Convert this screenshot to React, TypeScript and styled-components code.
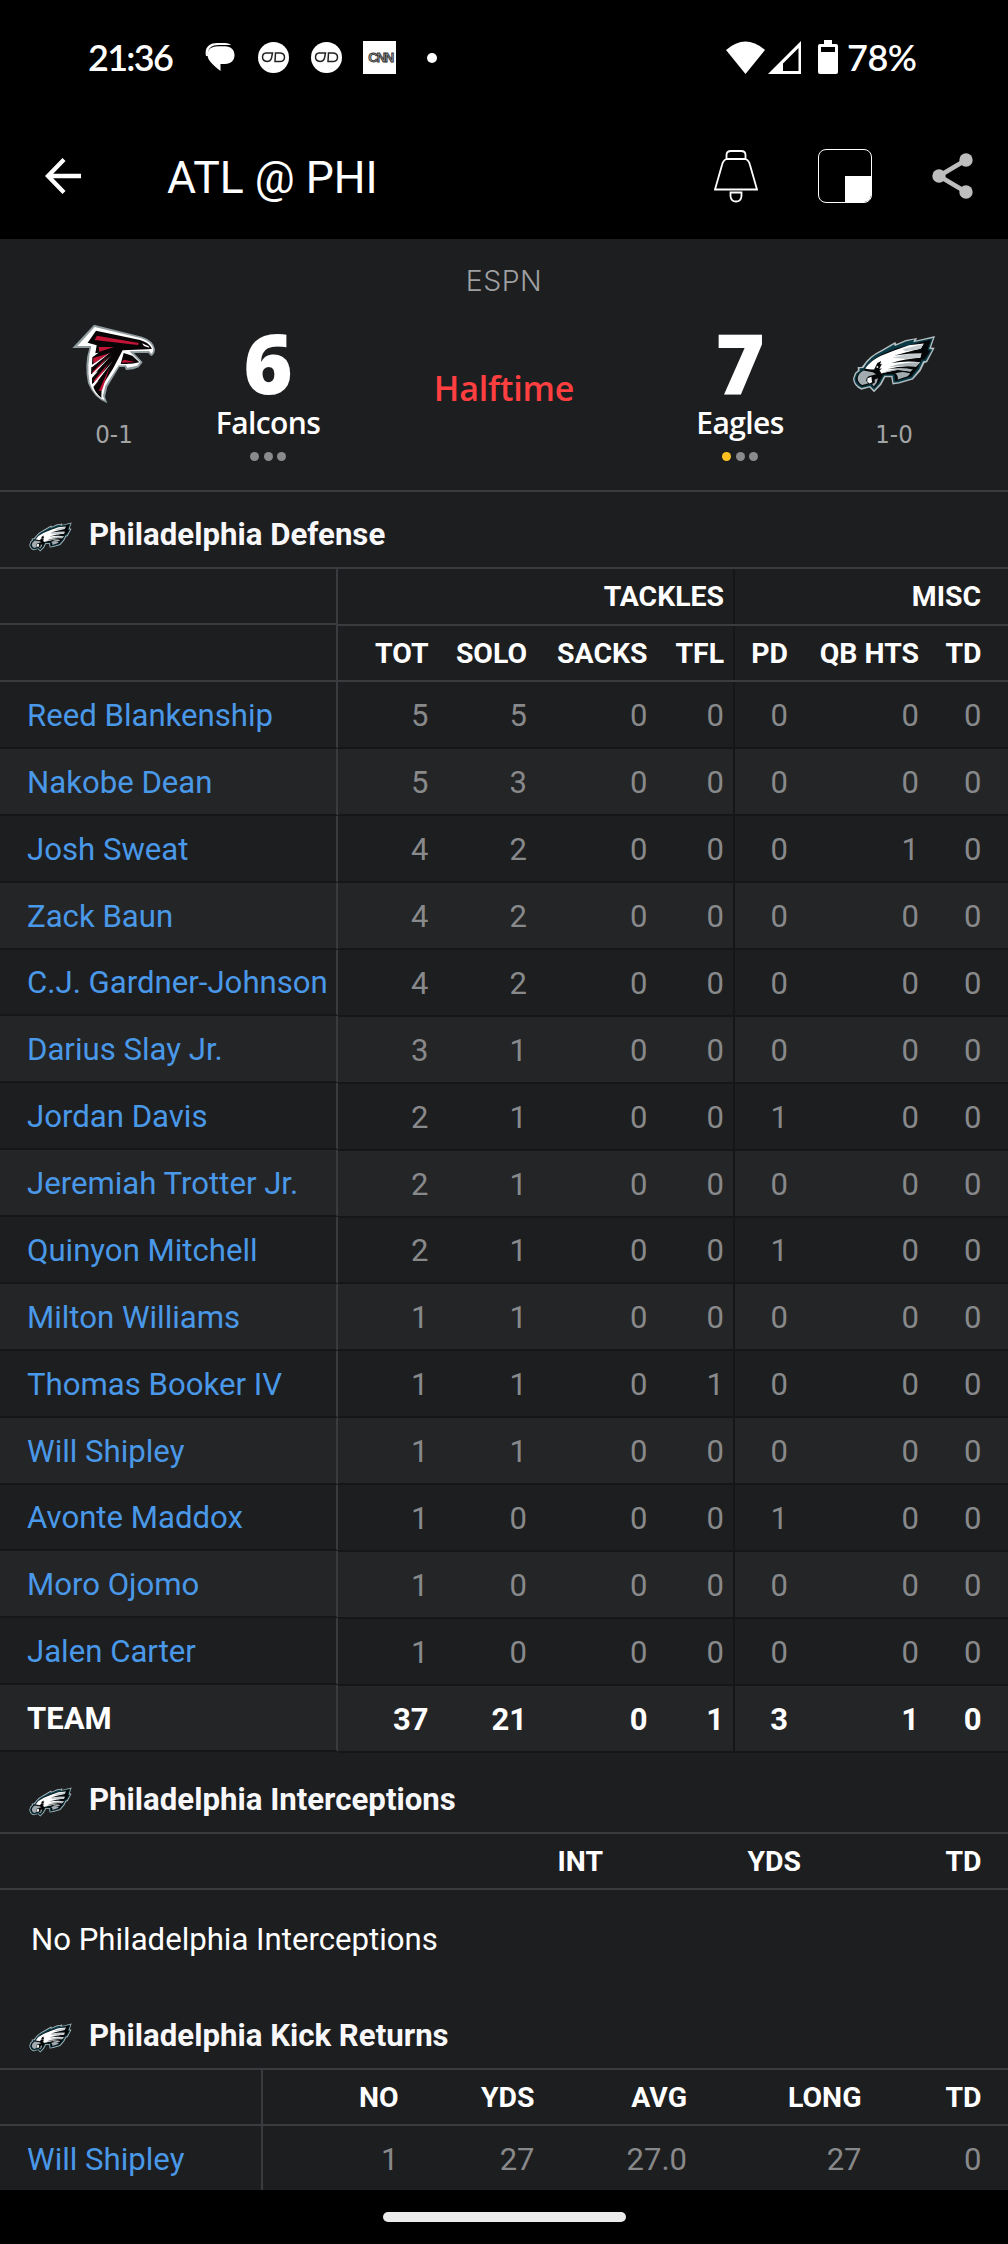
import React from "react";
import styled, { createGlobalStyle } from "styled-components";

interface PlayerRow {
  name: string;
  stats: string[];
}

const defense: PlayerRow[] = [
  { name: "Reed Blankenship", stats: ["5", "5", "0", "0", "0", "0", "0"] },
  { name: "Nakobe Dean", stats: ["5", "3", "0", "0", "0", "0", "0"] },
  { name: "Josh Sweat", stats: ["4", "2", "0", "0", "0", "1", "0"] },
  { name: "Zack Baun", stats: ["4", "2", "0", "0", "0", "0", "0"] },
  { name: "C.J. Gardner-Johnson", stats: ["4", "2", "0", "0", "0", "0", "0"] },
  { name: "Darius Slay Jr.", stats: ["3", "1", "0", "0", "0", "0", "0"] },
  { name: "Jordan Davis", stats: ["2", "1", "0", "0", "1", "0", "0"] },
  { name: "Jeremiah Trotter Jr.", stats: ["2", "1", "0", "0", "0", "0", "0"] },
  { name: "Quinyon Mitchell", stats: ["2", "1", "0", "0", "1", "0", "0"] },
  { name: "Milton Williams", stats: ["1", "1", "0", "0", "0", "0", "0"] },
  { name: "Thomas Booker IV", stats: ["1", "1", "0", "1", "0", "0", "0"] },
  { name: "Will Shipley", stats: ["1", "1", "0", "0", "0", "0", "0"] },
  { name: "Avonte Maddox", stats: ["1", "0", "0", "0", "1", "0", "0"] },
  { name: "Moro Ojomo", stats: ["1", "0", "0", "0", "0", "0", "0"] },
  { name: "Jalen Carter", stats: ["1", "0", "0", "0", "0", "0", "0"] },
  { name: "TEAM", stats: ["37", "21", "0", "1", "3", "1", "0"] },
];

const tackleHeads = ["TOT", "SOLO", "SACKS", "TFL"];
const miscHeads = ["PD", "QB HTS", "TD"];

const EaglesLogo: React.FC<{ width: number; height: number }> = ({
  width,
  height,
}) => (
  <svg width={width} height={height} viewBox="878 253 253 176">
    <path
      d="M880 386 L886 368 L895 360 L894 350 L906 350 L912 343 Q930 316 965 299 L1008 274 L1012 280 L1040 268 L1075 262 L1071 270 L1129 256 L1117 291 L1128 292 L1105 336 L1097 338 L1085 362 L1062 388 L1020 400 L1000 403 L996 381 L978 381 L966 404 L944 427 L930 412 L906 419 Q882 410 880 386Z"
      fill="#b4bdc0"
    />
    <path
      d="M884 386 L890 370 L900 362 L900 354 L912 353 Q930 320 966 304 L1004 282 L1008 286 L1040 273 L1066 267 L1063 275 L1123 262 L1111 295 L1121 297 L1102 331 L1093 333 L1081 358 L1059 384 L1018 396 L1003 398 L1000 377 L975 377 L962 401 L944 420 L932 408 L906 414 Q886 406 884 386Z"
      fill="#0a3a45"
    />
    <path
      d="M889 386 L895 371 L906 362 L914 358 Q934 328 970 311 L1010 294 L1062 281 L1117 267 L1106 298 L1114 302 L1097 327 L1087 328 L1076 354 L1056 379 L1008 393 L1006 372 L972 373 L958 398 L944 413 L934 401 L908 409 Q892 402 889 386Z"
      fill="#050607"
    />
    {/* beak */}
    <path
      d="M894 386 Q896 368 912 361 L940 366 L950 372 L936 376 Q920 378 920 392 L926 400 L908 405 Q896 399 894 386Z"
      fill="#a2acb0"
    />
    <path d="M924 384 L936 380 L938 396 L930 400 L923 394Z" fill="#f4f6f6" />
    <path d="M946 388 L956 384 L952 398 L943 409 L938 402 L946 398Z" fill="#a2acb0" />
    {/* crown and feathers */}
    <path
      d="M917 355 Q934 330 965 316 L1005 300 L1050 284 L1095 279 L1085 295 L1050 303 L1088 307 L1084 322 L1050 327 L1084 336 L1070 350 L1040 350 L1062 356 L1054 364 L1016 358 L966 370 L962 362 L942 362Z"
      fill="#fff"
    />
    <path d="M1030 296 L1094 280 L1086 295 L1040 302Z" fill="#c5cccf" />
    <path d="M1000 322 L1040 312 L1088 308 L1084 322 L1040 326Z" fill="#c5cccf" />
    <path d="M990 350 Q1030 336 1083 336 L1071 350 L1030 346Z" fill="#a9b2b6" />
    <path d="M966 369 Q1010 350 1062 356 L1054 364 L1016 359Z" fill="#a9b2b6" />
    <path
      d="M1090 296 Q1050 302 1006 315 Q1050 308 1090 308Z M1088 323 Q1040 324 996 338 Q1044 330 1086 336Z M1074 350 Q1030 344 984 357 Q1030 351 1062 358Z"
      fill="#050607"
    />
    <path
      d="M1008 370 Q1030 360 1054 370 L1046 378 L1016 388 Q1018 376 1008 370Z"
      fill="#a2acb0"
    />
    {/* eye */}
    <path
      d="M916 357 L944 358 L954 338 L966 332 L962 342 L968 340 L960 356 L968 354 L956 366 L940 363Z"
      fill="#050607"
    />
    <circle cx="954" cy="350" r="3" fill="#dfe3e4" />
  </svg>
);

const FalconsLogo = () => (
  <svg width="84" height="80" viewBox="100 222 252 240">
    <path
      d="M101 294 L166 224 L310 260 Q346 272 349 298 Q348 315 337 318 L329 309 L286 309 L312 337 L300 352 L284 358 L262 360 L258 351 L242 351 L206 410 L199 440 L206 460 Q165 444 148 400 Q136 345 152 294Z"
      fill="#8f9b9f"
    />
    <path
      d="M116 288 L168 231 L308 265 Q338 275 344 297 Q344 307 338 311 L331 303 L272 304 L305 336 L296 347 L266 353 L262 346 L240 346 L200 408 L193 438 L198 451 Q166 438 153 398 Q143 345 158 288Z"
      fill="#fff"
    />
    <path
      d="M147 278 L172 242 L304 270 Q330 277 340 296 L328 298 L252 301 L224 354 L189 410 L188 444 Q168 426 164 410 L180 392 L160 402 L160 384 L178 364 L157 374 L158 352 L176 337 L160 345 L161 322 L180 308 L170 310 L174 286Z"
      fill="#090506"
    />
    <path d="M168 270 L175 257 L300 279 L298 285Z" fill="#c41436" />
    <path d="M180 291 L226 291 L182 305Z" fill="#c41436" />
    <path d="M164 324 L212 310 L164 341Z" fill="#c41436" />
    <path d="M161 366 L208 318 L164 374Z" fill="#c41436" />
    <path d="M165 392 L210 338 L171 402Z" fill="#c41436" />
    <path d="M180 424 L213 352 L190 421Z" fill="#c41436" />
    {/* gaps between the wing feathers */}
    <path
      d="M158 346 L216 307 L160 352Z M156 375 L218 316 L158 382Z M160 404 L222 334 L164 410Z"
      fill="#fff"
    />
    <path d="M255 309 L281 317 L302 337 L276 342 L246 342Z" fill="#090506" />
    <path d="M255 329 L290 336 L248 338Z" fill="#c41436" />
    <path d="M266 341 L282 341 L276 349Z" fill="#fff" />
    <path d="M310 280 L330 289 L332 293 L316 288Z" fill="#fff" />
  </svg>
);

const MessagesIcon = () => (
  <svg width="31" height="29" viewBox="0 0 31 29">
    <path d="M1 13 C-1 4 5 0 12 0 L20 0 C23 0 25 1 26 2 L14 2 C6 2 2 6 3 13Z" fill="#fff" />
    <path
      d="M2.5 12 C2.5 6 7 3.3 13 3.3 L20 3.3 C26 3.3 29.5 7 29.5 12 C29.5 17.5 26 21 20 21 L15.5 21 L15.5 28 C10 23.5 2.5 18 2.5 12Z"
      fill="#fff"
    />
  </svg>
);

const GlassesIcon = () => (
  <svg width="31" height="31" viewBox="0 0 31 31">
    <circle cx="15.5" cy="15.5" r="15.5" fill="#fff" />
    <path
      d="M8 11 H14.5 L13.5 16 Q12.5 19.5 9 19.5 Q4.5 19 4.5 15 Q4.7 11.3 8 11Z M17.5 11 H22.5 Q26.5 11.5 26.5 15.3 Q26.5 19.2 22.5 19.5 H17Z"
      fill="none"
      stroke="#222"
      strokeWidth="1.5"
    />
  </svg>
);

const ShareIcon = () => (
  <svg width="42" height="46" viewBox="0 0 42 46">
    <path d="M34 7 L7 23 L34 39" fill="none" stroke="#bebebe" strokeWidth="4.6" />
    <circle cx="34" cy="7" r="6.7" fill="#bebebe" />
    <circle cx="7" cy="23" r="6.7" fill="#bebebe" />
    <circle cx="34" cy="39" r="6.7" fill="#bebebe" />
  </svg>
);

const App: React.FC = () => {
  return (
    <Screen>
      <GlobalStyle />
      <StatusBar>
        <StatusLeft>
          <Clock>21:36</Clock>
          <MessagesIcon />
          <GlassesIcon />
          <GlassesIcon />
          <CnnTile>
            <CnnText>CNN</CnnText>
          </CnnTile>
          <MoreDot />
        </StatusLeft>
        <StatusRight>
          <svg width="39" height="33" viewBox="0 0 39 33">
            <path d="M0 9 Q19.5 -8 39 9 L19.5 33Z" fill="#fff" />
          </svg>
          <SignalIcon width="33" height="33" viewBox="0 0 33 33">
            <path d="M33 0 V33 H0Z M30.5 7 L15 22.5 V30 H30.5Z" fill="#fff" fillRule="evenodd" />
          </SignalIcon>
          <BatteryIcon width="20" height="34" viewBox="0 0 20 34">
            <path
              d="M6 0 H14 V4 H18 Q20 4 20 6 V32 Q20 34 18 34 H2 Q0 34 0 32 V6 Q0 4 2 4 H6Z M3 7 V12 H17 V7Z"
              fill="#fff"
              fillRule="evenodd"
            />
          </BatteryIcon>
          <BatteryLevel>78%</BatteryLevel>
        </StatusRight>
      </StatusBar>

      <Toolbar>
        <svg width="37" height="36" viewBox="0 0 37 36">
          <path d="M19 1.5 L3 18 L19 34.5 M3 18 H36" fill="none" stroke="#fff" strokeWidth="4.3" />
        </svg>
        <ToolbarTitle>ATL @ PHI</ToolbarTitle>
        <ToolbarActions>
          <svg width="44" height="53" viewBox="0 0 44 53">
            <path
              d="M12.5 8.5 V5 Q12.5 1 17 1 H27 Q31.5 1 31.5 5 V8.5 M12.5 9 H31.5 Q35 10.5 36 15 L43 39.5 H1 L8 15 Q9 10.5 12.5 9Z M16.5 42.5 H27.5 V46 Q27 51.5 22 51.5 Q17 51.5 16.5 46Z"
              fill="none"
              stroke="#fff"
              strokeWidth="1.8"
            />
          </svg>
          <PipIcon>
            <PipCorner />
          </PipIcon>
          <ShareIcon />
        </ToolbarActions>
      </Toolbar>

      <Scoreboard>
        <Network>ESPN</Network>
        <ScoreGrid>
          <LogoColumn>
            <LogoSlot>
              <FalconsLogo />
            </LogoSlot>
            <Record>0-1</Record>
          </LogoColumn>
          <TeamColumn>
            <Score>6</Score>
            <TeamName>Falcons</TeamName>
            <Timeouts>
              <Timeout />
              <Timeout />
              <Timeout />
            </Timeouts>
          </TeamColumn>
          <GameStatus>Halftime</GameStatus>
          <TeamColumn>
            <Score>7</Score>
            <TeamName>Eagles</TeamName>
            <Timeouts>
              <Timeout $active />
              <Timeout />
              <Timeout />
            </Timeouts>
          </TeamColumn>
          <LogoColumn>
            <LogoSlot>
              <EaglesLogo width={84} height={58} />
            </LogoSlot>
            <Record>1-0</Record>
          </LogoColumn>
        </ScoreGrid>
      </Scoreboard>

      <SectionHeader $height={75}>
        <EaglesLogo width={43} height={30} />
        <SectionTitle>Philadelphia Defense</SectionTitle>
      </SectionHeader>
      <DefenseTable>
        <NameColumn $width={338}>
          <HeadCell $height={56} />
          <HeadCell $height={57} />
          <NameRows>
            {defense.map((player) => (
              <NameCell key={player.name} $team={player.name === "TEAM"}>
                {player.name}
              </NameCell>
            ))}
          </NameRows>
        </NameColumn>
        <StatColumn>
          <GroupHeads>
            <GroupHead $divider>TACKLES</GroupHead>
            <GroupHead>MISC</GroupHead>
          </GroupHeads>
          <StatHeads>
            {tackleHeads.map((head, i) => (
              <Stat key={head} $divider={i === 3}>
                {head}
              </Stat>
            ))}
            {miscHeads.map((head) => (
              <Stat key={head}>{head}</Stat>
            ))}
          </StatHeads>
          <StatRows>
            {defense.map((player) => (
              <StatRow key={player.name} $team={player.name === "TEAM"}>
                {player.stats.map((stat, i) => (
                  <Stat key={i} $divider={i === 3}>
                    {stat}
                  </Stat>
                ))}
              </StatRow>
            ))}
          </StatRows>
        </StatColumn>
      </DefenseTable>

      <SectionHeader $height={79}>
        <EaglesLogo width={43} height={30} />
        <SectionTitle>Philadelphia Interceptions</SectionTitle>
      </SectionHeader>
      <InterceptionHeads>
        <Stat>INT</Stat>
        <Stat>YDS</Stat>
        <Stat>TD</Stat>
      </InterceptionHeads>
      <EmptyMessage>No Philadelphia Interceptions</EmptyMessage>

      <SectionHeader $height={78}>
        <EaglesLogo width={43} height={30} />
        <SectionTitle>Philadelphia Kick Returns</SectionTitle>
      </SectionHeader>
      <ReturnsTable>
        <NameColumn $width={263}>
          <HeadCell $height={56} />
          <NameCell>Will Shipley</NameCell>
        </NameColumn>
        <StatColumn>
          <ReturnHeads>
            <Stat>NO</Stat>
            <Stat>YDS</Stat>
            <Stat>AVG</Stat>
            <Stat>LONG</Stat>
            <Stat>TD</Stat>
          </ReturnHeads>
          <ReturnRow>
            <Stat>1</Stat>
            <Stat>27</Stat>
            <Stat>27.0</Stat>
            <Stat>27</Stat>
            <Stat>0</Stat>
          </ReturnRow>
        </StatColumn>
      </ReturnsTable>

      <NavigationBar>
        <HomeHandle />
      </NavigationBar>
    </Screen>
  );
};

export default App;

const GlobalStyle = createGlobalStyle`
  * {
    box-sizing: border-box;
  }

  body {
    margin: 0;
    background: #000;
  }

  svg {
    display: block;
    flex-shrink: 0;
  }
`;

const Screen = styled.div`
  display: flex;
  flex-direction: column;
  width: 1008px;
  height: 2244px;
  overflow: hidden;
  background: #1d1e20;
  color: #fff;
  font-family: Roboto, sans-serif;
`;

const StatusBar = styled.div`
  display: flex;
  justify-content: space-between;
  flex-shrink: 0;
  height: 115px;
  padding: 0 90px 0 88px;
  background: #000;
`;

const StatusLeft = styled.div`
  display: flex;
  align-items: center;
  height: 115px;
  gap: 22px;
`;

const StatusRight = styled.div`
  display: flex;
  align-items: center;
  height: 114px;
`;

const Clock = styled.div`
  width: 95px;
  padding-bottom: 2px;
  font-family: Lato, sans-serif;
  font-size: 36px;
  font-weight: 600;
  letter-spacing: -1.7px;
  white-space: nowrap;
`;

const CnnTile = styled.div`
  display: flex;
  align-items: center;
  justify-content: center;
  width: 33px;
  height: 33px;
  margin-left: -1px;
  background: #fff;
`;

const CnnText = styled.span`
  color: #999;
  font-family: "Liberation Sans", sans-serif;
  font-size: 13.5px;
  font-weight: 700;
  letter-spacing: -1.6px;
  margin-right: -2px;
  -webkit-text-stroke: 0.8px #333;
`;

const MoreDot = styled.div`
  width: 10px;
  height: 10px;
  margin-left: 9px;
  border-radius: 50%;
  background: #fff;
`;

const SignalIcon = styled.svg`
  margin-left: 3px;
`;

const BatteryIcon = styled.svg`
  margin-left: 17px;
`;

const BatteryLevel = styled.div`
  width: 71px;
  margin-left: 9px;
  padding-bottom: 1px;
  font-family: Lato, sans-serif;
  font-size: 36px;
  font-weight: 600;
  letter-spacing: -0.5px;
`;

const Toolbar = styled.div`
  display: flex;
  align-items: center;
  flex-shrink: 0;
  height: 124px;
  padding: 0 34px 2px 45px;
  background: #000;
`;

const ToolbarTitle = styled.div`
  margin-left: 85px;
  padding-top: 3px;
  font-size: 44.5px;
`;

const ToolbarActions = styled.div`
  display: flex;
  align-items: center;
  gap: 60px;
  margin-left: auto;
`;

const PipIcon = styled.div`
  display: flex;
  align-items: flex-end;
  justify-content: flex-end;
  width: 54px;
  height: 54px;
  border: 1.5px solid #fff;
  border-radius: 8px;
  overflow: hidden;
`;

const PipCorner = styled.div`
  width: 26px;
  height: 26px;
  background: #fff;
`;

const Scoreboard = styled.div`
  flex-shrink: 0;
  height: 253px;
  padding-top: 25px;
  border-bottom: 2px solid #3a3b3e;
`;

const Network = styled.div`
  height: 33px;
  line-height: 34px;
  color: #9fa0a2;
  font-family: Inter, sans-serif;
  font-size: 28.5px;
  font-weight: 350;
  letter-spacing: 0.5px;
  text-align: center;
`;

const ScoreGrid = styled.div`
  display: grid;
  grid-template-columns: 154px 154px 1fr 154px 154px;
  padding: 0 37px;
`;

const LogoColumn = styled.div`
  display: flex;
  flex-direction: column;
  align-items: center;
  padding-top: 24px;
`;

const LogoSlot = styled.div`
  display: flex;
  align-items: center;
  height: 85px;
`;

const Record = styled.div`
  margin-top: 11px;
  color: #a2a3a5;
  font-family: "DejaVu Sans Condensed", "DejaVu Sans", sans-serif;
  font-size: 25.5px;
  font-stretch: condensed;
  font-weight: 200;
  line-height: 34px;
`;

const TeamColumn = styled.div`
  display: flex;
  flex-direction: column;
  align-items: center;
`;

const Score = styled.div`
  height: 106px;
  line-height: 130px;
  font-family: "Open Sans", sans-serif;
  font-size: 84px;
  font-weight: 800;
`;

const TeamName = styled.div`
  height: 40px;
  line-height: 40px;
  font-family: "Open Sans", sans-serif;
  font-size: 30px;
  font-weight: 600;
  letter-spacing: -0.6px;
`;

const Timeouts = styled.div`
  display: flex;
  gap: 4.5px;
  margin-top: 9px;
`;

const Timeout = styled.span<{ $active?: boolean }>`
  width: 9px;
  height: 9px;
  border-radius: 50%;
  background: ${({ $active }) => ($active ? "#ffc121" : "#8a8b8d")};
`;

const GameStatus = styled.div`
  padding-top: 68px;
  color: #ff3f40;
  font-family: "Open Sans", sans-serif;
  font-size: 34px;
  font-weight: 600;
  letter-spacing: -0.2px;
  line-height: 46px;
  text-align: center;
`;

const SectionHeader = styled.div<{ $height: number }>`
  display: flex;
  align-items: flex-end;
  flex-shrink: 0;
  height: ${({ $height }) => $height}px;
  padding: 0 0 15px 29px;
`;

const SectionTitle = styled.div`
  margin-left: 17px;
  color: #f8f8fa;
  font-size: 31.2px;
  font-weight: 700;
  line-height: 35px;
`;

const DefenseTable = styled.div`
  display: flex;
  align-items: flex-start;
  flex-shrink: 0;
  height: 1186px;
  border-top: 2px solid #3a3b3e;
`;

const NameColumn = styled.div<{ $width: number }>`
  width: ${({ $width }) => $width}px;
  flex-shrink: 0;
`;

const HeadCell = styled.div<{ $height: number }>`
  height: ${({ $height }) => $height}px;
  border-right: 2px solid #3a3b3e;
  border-bottom: 2px solid #3a3b3e;
`;

const NameRows = styled.div`
  display: grid;
  grid-auto-rows: 1fr;
  height: 1070px;
`;

const NameCell = styled.div<{ $team?: boolean }>`
  display: flex;
  align-items: center;
  min-height: 66px;
  padding: 2px 0 0 27px;
  border-right: 2px solid #3a3b3e;
  border-bottom: 2px solid #151618;
  color: ${({ $team }) => ($team ? "#fff" : "#4a98e8")};
  font-size: ${({ $team }) => ($team ? 31 : 31.15)}px;
  font-weight: ${({ $team }) => ($team ? 700 : 400)};
  white-space: nowrap;

  &:nth-child(even) {
    background: ${({ $team }) => ($team === undefined ? "none" : "#242527")};
  }
`;

const StatColumn = styled.div`
  flex: 1;
`;

const GroupHeads = styled.div`
  display: grid;
  grid-template-columns: 397px 1fr;
  height: 57px;
  border-bottom: 2px solid #3a3b3e;
  font-size: 28.4px;
  font-weight: 700;
`;

const GroupHead = styled.div<{ $divider?: boolean }>`
  display: flex;
  align-items: center;
  justify-content: flex-end;
  padding-right: ${({ $divider }) => ($divider ? 9 : 27)}px;
  border-right: ${({ $divider }) => ($divider ? "2px solid #151618" : "none")};
`;

const StatGrid = styled.div`
  display: grid;
  grid-template-columns: 90.5px 98.5px 120.5px 87.5px 53px 131px 62.5px;
`;

const StatHeads = styled(StatGrid)`
  height: 56px;
  border-bottom: 2px solid #3a3b3e;
  font-size: 28.4px;
  font-weight: 700;
`;

const StatRows = styled.div`
  display: grid;
  grid-auto-rows: 1fr;
  height: 1071px;
`;

const StatRow = styled(StatGrid)<{ $team: boolean }>`
  border-bottom: 2px solid #151618;
  color: ${({ $team }) => ($team ? "#fff" : "#88898b")};
  font-size: 31px;
  font-weight: ${({ $team }) => ($team ? 700 : 400)};

  &:nth-child(even) {
    background: #242527;
  }

  & > div {
    padding-top: 2px;
  }
`;

const Stat = styled.div<{ $divider?: boolean }>`
  display: flex;
  align-items: center;
  justify-content: flex-end;
  padding-right: ${({ $divider }) => ($divider ? 9 : 0)}px;
  border-right: ${({ $divider }) => ($divider ? "2px solid #151618" : "none")};
  white-space: nowrap;
`;

const InterceptionHeads = styled.div`
  display: grid;
  grid-template-columns: 603px 198px 180.5px;
  flex-shrink: 0;
  height: 58px;
  border-top: 2px solid #3a3b3e;
  border-bottom: 2px solid #3a3b3e;
  font-size: 28.4px;
  font-weight: 700;
`;

const EmptyMessage = styled.div`
  flex-shrink: 0;
  height: 100px;
  padding: 32px 0 0 31px;
  font-size: 31.15px;
  line-height: 36px;
`;

const ReturnsTable = styled.div`
  display: flex;
  flex-shrink: 0;
  height: 122px;
  overflow: hidden;
  border-top: 2px solid #3a3b3e;
`;

const ReturnGrid = styled.div`
  display: grid;
  grid-template-columns: 135.5px 136px 152.5px 174.5px 120px;
`;

const ReturnHeads = styled(ReturnGrid)`
  height: 56px;
  border-bottom: 2px solid #3a3b3e;
  font-size: 28.4px;
  font-weight: 700;
`;

const ReturnRow = styled(ReturnGrid)`
  height: 66px;
  color: #88898b;
  font-size: 31px;
`;

const NavigationBar = styled.div`
  display: flex;
  justify-content: center;
  flex: 1;
  padding-top: 22px;
  background: #000;
`;

const HomeHandle = styled.div`
  width: 243px;
  height: 10px;
  border-radius: 5px;
  background: #ececec;
`;
